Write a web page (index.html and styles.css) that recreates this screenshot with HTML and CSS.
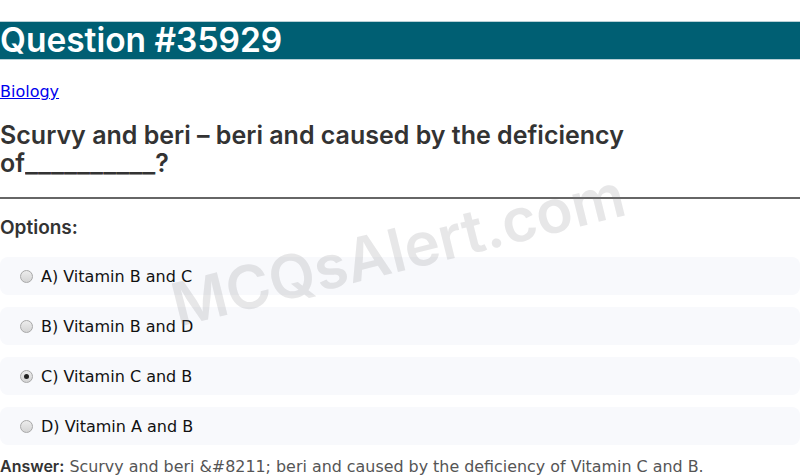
FILE: index.html
```html
<!DOCTYPE html>
<html>
<head>
<meta charset="utf-8">
<link rel="stylesheet" href="styles.css">
</head>
<body>
<div class="page">
  <h1 class="title">Question #35929</h1>
  <p class="cat"><a href="#">Biology</a></p>
  <h2 class="question">Scurvy and beri – beri and caused by the deficiency <span class="tail">of<span class="blank">__________</span>?</span></h2>
  <hr class="rule">
  <h3 class="opts-label">Options:</h3>
  <div class="options">
    <label class="opt"><input type="radio" name="o"> A) Vitamin B and C</label>
    <label class="opt"><input type="radio" name="o"> B) Vitamin B and D</label>
    <label class="opt"><input type="radio" name="o" checked> C) Vitamin C and B</label>
    <label class="opt"><input type="radio" name="o"> D) Vitamin A and B</label>
  </div>
  <p class="answer"><strong>Answer:</strong> Scurvy and beri &amp;#8211; beri and caused by the deficiency of Vitamin C and B.</p>
  <div class="watermark">MCQsAlert.com</div>
</div>
</body>
</html>
```
FILE: styles.css
```css
html, body { margin: 0; padding: 0; background: #fff; }
body { font-family: "DejaVu Sans", sans-serif; color: #333; overflow: hidden; }
.page { position: relative; }
.title {
  margin: 21px 0 0;
  background: #005f73;
  color: #fff;
  font-family: Inter, "DejaVu Sans", sans-serif;
  font-size: 33.5px;
  font-weight: 600;
  line-height: 37px;
  border-top: 1px solid #b9d0d6;
  border-bottom: 1px solid #b9d0d6;
}
.cat { margin: 22px 0 0; font-size: 16px; line-height: 20px; }
.cat a { color: #00e; }
.question {
  margin: 19px 0 0;
  font-family: Inter, "DejaVu Sans", sans-serif;
  font-size: 25px;
  line-height: 28px;
  font-weight: 600;
  color: #333;
  max-width: 680px;
}
.tail { white-space: nowrap; }
.blank { display: inline-block; transform: scaleX(1.11); transform-origin: 0 50%; margin-right: 13px; }
.rule { margin: 20px 0 0; border: 0; border-top: 2px solid #666; }
.opts-label { margin: 18px 0 0; font-family: Inter, "DejaVu Sans", sans-serif; font-size: 19px; font-weight: 600; line-height: 22px; color: #333; }
.options { margin-top: 18px; display: flex; flex-direction: column; gap: 12px; }
.opt {
  display: flex; align-items: center; gap: 8px;
  height: 38px; padding: 0 20px;
  background: #f8f9fc; border-radius: 8px;
  font-size: 16px; color: #111;
}
.opt input {
  -webkit-appearance: none; appearance: none;
  margin: 0; width: 13px; height: 13px; border-radius: 50%;
  border: 1px solid #a8a8a8;
  background: linear-gradient(#ececec, #d4d4d4);
  box-sizing: border-box; position: relative;
}
.opt input:checked::after {
  content: ""; position: absolute; left: 3px; top: 3px;
  width: 5px; height: 5px; border-radius: 50%; background: #222;
}
.answer { margin: 12px 0 0; font-size: 15.9px; line-height: 19px; color: #555; }
.answer strong { font-family: Inter, "DejaVu Sans", sans-serif; font-size: 16px; font-weight: 600; color: #333; }
.watermark {
  position: absolute; left: 177px; top: 254px;
  font-family: Inter, "DejaVu Sans", sans-serif;
  font-size: 60px; font-weight: 600; line-height: 1; color: rgba(120,120,130,0.18);
  transform: rotate(-14deg); transform-origin: 0 80%;
  white-space: nowrap; pointer-events: none;
}
```
